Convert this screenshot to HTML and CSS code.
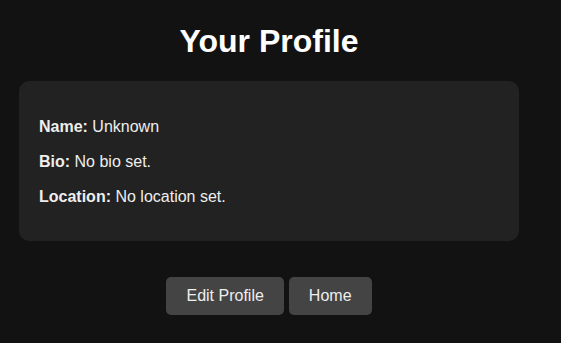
FILE: index.html
```html
<!DOCTYPE html>
<html lang="en">
<head>
    <meta charset="UTF-8">
    <meta name="viewport" content="width=device-width, initial-scale=1.0">
    <title>Your Profile</title>
    <link rel="stylesheet" href="styles.css">
</head>
<body>
    <div class="container">
        <h1>Your Profile</h1>

        <div class="profile-card">
            <p><strong>Name:</strong> Unknown</p>
            <p><strong>Bio:</strong> No bio set.</p>
            <p><strong>Location:</strong> No location set.</p>
        </div>

        <div class="actions">
            <button>Edit Profile</button>
            <button>Home</button>
        </div>
    </div>
</body>
</html>
```

FILE: styles.css
```css
body {
    margin: 0;
    background: #121212;
    color: #eee;
    font-family: 'Liberation Sans', Arial, sans-serif;
}

.container {
    width: 500px;
    padding: 0 19px;
}

h1 {
    font-size: 32px;
    line-height: 37px;
    color: #fff;
    text-align: center;
    margin: 23px 0 21px;
}

.profile-card {
    background: #222;
    border-radius: 10px;
    padding: 20px 20px 19px;
}

.profile-card p {
    font-size: 16px;
    line-height: 19px;
    margin: 16px 0;
}

.actions {
    display: flex;
    justify-content: center;
    gap: 5px;
    margin-top: 36px;
}

button {
    background: #444;
    color: #eee;
    border: none;
    border-radius: 5px;
    padding: 10px 20px;
    font-family: 'Liberation Sans', Arial, sans-serif;
    font-size: 16px;
    line-height: 18px;
    cursor: pointer;
}
```
